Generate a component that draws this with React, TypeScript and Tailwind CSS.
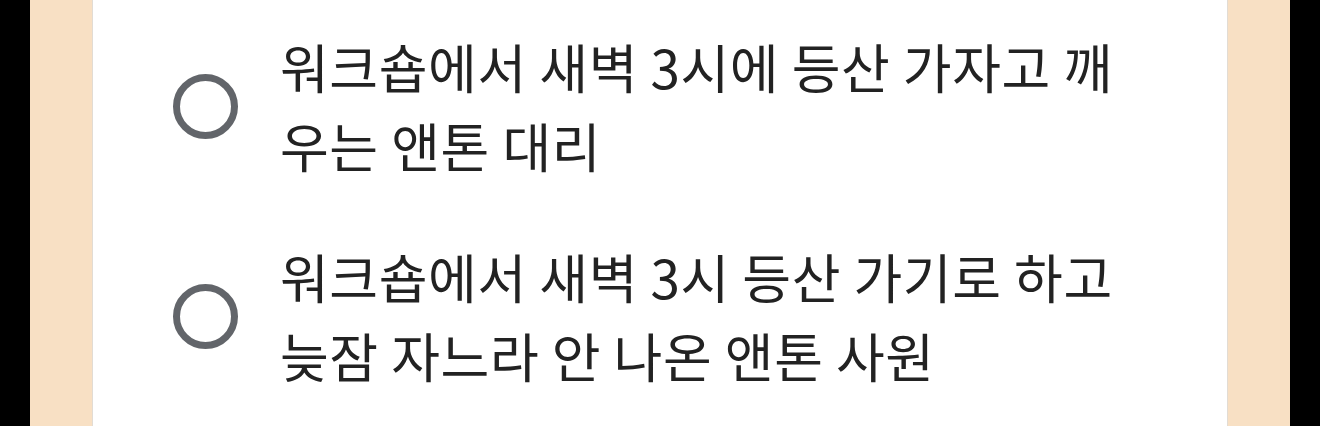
const options = [
  '워크숍에서 새벽 3시에 등산 가자고 깨우는 앤톤 대리',
  '워크숍에서 새벽 3시 등산 가기로 하고 늦잠 자느라 안 나온 앤톤 사원',
];

function RadioRing() {
  return (
    <span className="shrink-0 w-[65px] h-[65px] rounded-full border-[7px] border-[#62656a] bg-white" />
  );
}

export default function App() {
  return (
    <div className="w-full h-[426px] bg-black px-[30px] overflow-hidden">
      <div className="h-full bg-[#f8e0c4] px-[62px]">
        <div className="h-full bg-white border-x border-[#e2dcd4] pl-[80px] pt-[27px] flex flex-col gap-[52px]">
          {options.map((label) => (
            <div key={label} className="flex items-center gap-[42px]">
              <RadioRing />
              <p
                className="text-[53px] leading-[79px] tracking-[0.6px] text-[#222222] w-[840px] break-all"
                style={{ fontFamily: '"Noto Sans CJK KR", "Noto Sans", sans-serif' }}
              >
                {label}
              </p>
            </div>
          ))}
        </div>
      </div>
    </div>
  );
}
